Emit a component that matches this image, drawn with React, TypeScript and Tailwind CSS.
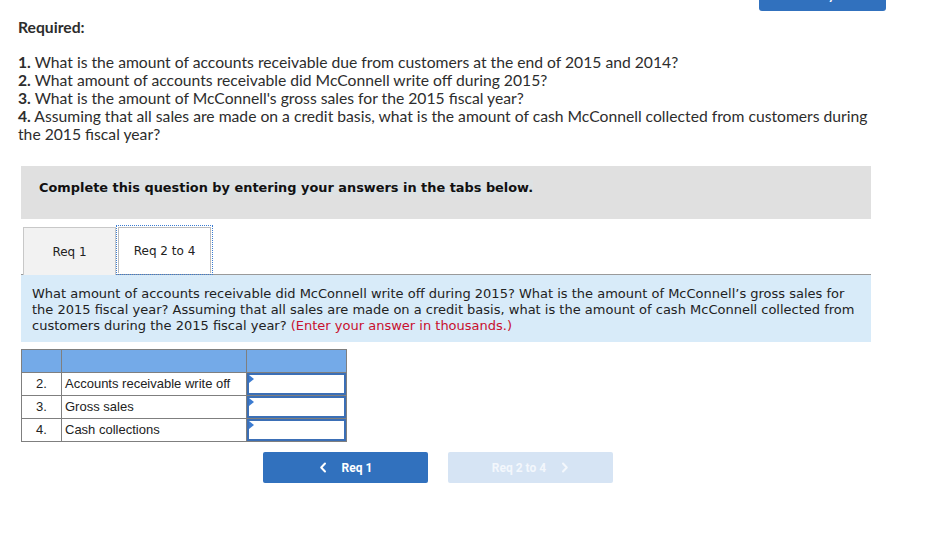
import React from "react";

const rows = [
  { n: "2.", label: "Accounts receivable write off" },
  { n: "3.", label: "Gross sales" },
  { n: "4.", label: "Cash collections" },
];

function ChevLeft() {
  return (
    <svg width="8" height="11" viewBox="0 0 8 11" fill="none">
      <path d="M6 1.5L2.2 5.5L6 9.5" stroke="currentColor" strokeWidth="2" strokeLinecap="round" strokeLinejoin="round" />
    </svg>
  );
}
function ChevRight() {
  return (
    <svg width="8" height="11" viewBox="0 0 8 11" fill="none">
      <path d="M2 1.5L5.8 5.5L2 9.5" stroke="currentColor" strokeWidth="2" strokeLinecap="round" strokeLinejoin="round" />
    </svg>
  );
}

export default function App() {
  return (
    <div className="w-[925px] h-[559px] bg-white overflow-hidden relative">
      {/* top bar */}
      <div className="flex justify-end pr-[39px] h-[11px]">
        <button className="mt-[-19px] h-[30px] w-[127px] rounded-[3px] bg-[#3171be] text-white text-[13px] font-bold leading-[16px] flex items-start justify-center pt-[6px]" style={{ fontFamily: "Lato, sans-serif" }}>
          Check my work
        </button>
      </div>

      <div className="pl-[18px] text-[#2d2d2d] text-[15.7px] leading-[18px]" style={{ fontFamily: "Lato, 'Open Sans', sans-serif" }}>
        <div className="mt-[7px] font-bold">Required:</div>
        <div className="mt-[17px] pr-[36px]">
          <div><span className="font-bold">1.</span> What is the amount of accounts receivable due from customers at the end of 2015 and 2014?</div>
          <div><span className="font-bold">2.</span> What amount of accounts receivable did McConnell write off during 2015?</div>
          <div><span className="font-bold">3.</span> What is the amount of McConnell's gross sales for the 2015 fiscal year?</div>
          <div><span className="font-bold">4.</span> Assuming that all sales are made on a credit basis, what is the amount of cash McConnell collected from customers during the 2015 fiscal year?</div>
        </div>
      </div>

      <div className="ml-[21px] w-[850px]" style={{ fontFamily: "'DejaVu Sans', Verdana, sans-serif" }}>
        <div className="mt-[23px] h-[53px] bg-[#e0e0e0] pl-[18px] pt-[14px] text-[12.9px] leading-[16px]">
          <span className="font-bold text-[#111] bg-[#dde2e4]">Complete this question by entering your answers in the tabs below.</span>
        </div>

        {/* tabs */}
        <div className="mt-[7px] h-[49px] flex items-end border-b border-[#9a9a9a]">
          <div className="ml-[2px] mb-[-1px] w-[93px] h-[48px] border border-[#c8c8c8] border-b-0 bg-[#f2f2f2] flex items-center justify-center text-[12px] text-[#222]">
            Req 1
          </div>
          <div className="mb-[-1px] w-[97px] h-[50px] border border-dotted border-[#3a7bd1] p-[1px]">
            <div className="w-full h-full border border-[#bcbcbc] border-b-0 bg-white flex items-center justify-center text-[12px] text-[#222]">
              Req 2 to 4
            </div>
          </div>
        </div>

        <div className="bg-[#d8ebf9] px-[11px] pt-[11px] pb-[8px] text-[13px] leading-[16px] text-[#222] h-[67px]">
          What amount of accounts receivable did McConnell write off during 2015? What is the amount of McConnell’s gross sales for the 2015 fiscal year? Assuming that all sales are made on a credit basis, what is the amount of cash McConnell collected from customers during the 2015 fiscal year?{" "}
          <span className="text-[#c8102e]">(Enter your answer in thousands.)</span>
        </div>

        {/* table */}
        <table className="mt-[7px] border-collapse text-[13px] text-[#222]" style={{ fontFamily: "'Liberation Sans', Arial, sans-serif" }}>
          <tbody>
            <tr className="h-[23px] bg-[#74aae8]">
              <td className="w-[40px] border border-[#7f7f7f] p-0"></td>
              <td className="w-[185px] border border-[#7f7f7f] p-0"></td>
              <td className="w-[100px] border border-[#7f7f7f] p-0"></td>
            </tr>
            {rows.map((r) => (
              <tr key={r.n} className="h-[23px]">
                <td className="border border-[#7f7f7f] p-0 text-center">{r.n}</td>
                <td className="border border-[#7f7f7f] p-0 pl-[3px]">{r.label}</td>
                <td className="border border-[#7f7f7f] p-0">
                  <div className="relative h-[22px] border-2 border-[#3b6fb6] bg-white">
                    <span className="absolute left-0 top-0 w-0 h-0 border-t-[4px] border-b-[4px] border-l-[5px] border-t-transparent border-b-transparent border-l-[#3b7bd1]"></span>
                  </div>
                </td>
              </tr>
            ))}
          </tbody>
        </table>
      </div>

      {/* nav buttons */}
      <div className="mt-[10px] ml-[263px] flex gap-[20px]" style={{ fontFamily: "Roboto, sans-serif" }}>
        <button className="w-[165px] h-[31px] rounded-[2px] bg-[#3171be] text-white text-[12px] font-bold flex items-center justify-center gap-[15px]">
          <ChevLeft />
          <span>Req 1</span>
        </button>
        <button className="w-[165px] h-[31px] rounded-[2px] bg-[#d6e4f4] text-[#f3f7fc] text-[12px] font-bold flex items-center justify-center gap-[15px]">
          <span>Req 2 to 4</span>
          <ChevRight />
        </button>
      </div>
    </div>
  );
}
